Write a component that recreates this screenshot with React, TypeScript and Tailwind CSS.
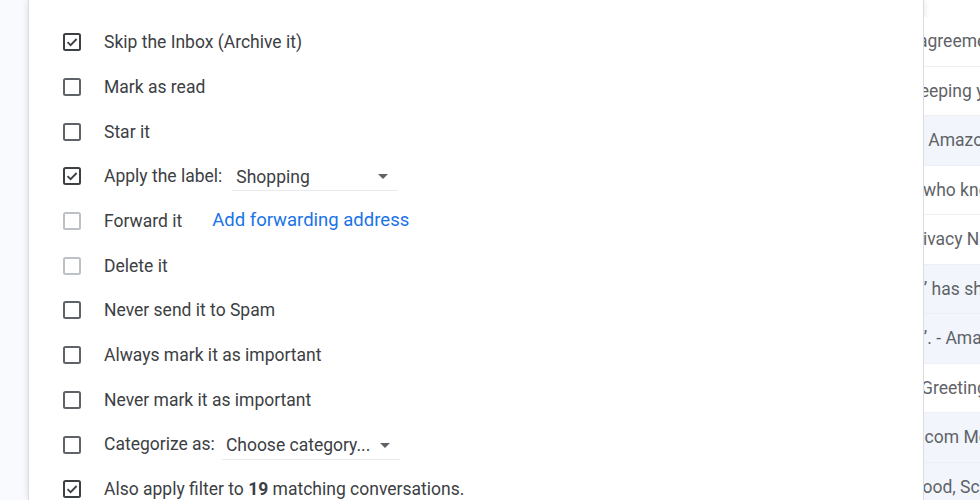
import React from "react";

type Row = {
  label: string;
  checked?: boolean;
  faded?: boolean;
  extra?: React.ReactNode;
};

function Checkbox({ checked, faded }: { checked?: boolean; faded?: boolean }) {
  const color = faded ? "#bdc1c6" : checked ? "#3c4043" : "#5f6368";
  return (
    <svg width="18" height="18" viewBox="0 0 18 18" className="shrink-0">
      <rect x="1" y="1" width="16" height="16" rx="1.5" fill="none" stroke={color} strokeWidth="2" />
      {checked && (
        <path d="M4.5 9.2 L7.6 12.2 L13.6 6" fill="none" stroke="#3c4043" strokeWidth="1.8" />
      )}
    </svg>
  );
}

function Select({ value, width }: { value: string; width: string }) {
  return (
    <div className={`flex items-center justify-between border-b border-[#e8eaed] h-[28px] pl-[4px] pr-[10px] ${width}`}>
      <span className="text-[#3c4043]">{value}</span>
      <svg width="10" height="5" viewBox="0 0 10 5">
        <path d="M0 0 L10 0 L5 5 Z" fill="#5f6368" />
      </svg>
    </div>
  );
}

const rows: Row[] = [
  { label: "Skip the Inbox (Archive it)", checked: true },
  { label: "Mark as read" },
  { label: "Star it" },
  {
    label: "Apply the label:",
    checked: true,
    extra: (
      <div className="ml-[10px] mt-[2px]">
        <Select value="Shopping" width="w-[166px]" />
      </div>
    ),
  },
  {
    label: "Forward it",
    faded: true,
    extra: <span className="ml-[30px] text-[18.5px] text-[#1a73e8]">Add forwarding address</span>,
  },
  { label: "Delete it", faded: true },
  { label: "Never send it to Spam" },
  { label: "Always mark it as important" },
  { label: "Never mark it as important" },
  {
    label: "Categorize as:",
    extra: (
      <div className="ml-[7px] mt-[2px]">
        <Select value="Choose category..." width="w-[178px]" />
      </div>
    ),
  },
];

const mail: { text: string; offset: string; read: boolean }[] = [
  { text: "agreement", offset: "-ml-[6px]", read: false },
  { text: "keeping you", offset: "-ml-[13px]", read: false },
  { text: " Amazon", offset: "ml-[0px]", read: true },
  { text: "who knows", offset: "-ml-[1px]", read: false },
  { text: "Privacy Notice", offset: "-ml-[18px]", read: false },
  { text: "\u201D has shared", offset: "-ml-[3px]", read: true },
  { text: "\u201D. - Amazon", offset: "-ml-[3px]", read: true },
  { text: "Greetings", offset: "-ml-[3px]", read: false },
  { text: ".com Member", offset: "-ml-[4px]", read: true },
  { text: "Food, School", offset: "-ml-[11px]", read: true },
];

export default function App() {
  return (
    <div
      className="flex h-[500px] w-[980px] overflow-hidden bg-white text-[17.5px]"
      style={{ fontFamily: "Roboto, 'Liberation Sans', sans-serif" }}
    >
      <div className="w-[28px] shrink-0 bg-[#f8fafd]" />
      <div className="w-[896px] shrink-0 bg-white border-l border-r border-[#dadce0] shadow-[0_0_6px_rgba(60,64,67,0.15)] pt-[20px] pl-[34px]">
        {rows.map((r) => (
          <div key={r.label} className="flex items-center h-[44.7px]">
            <Checkbox checked={r.checked} faded={r.faded} />
            <span className="ml-[23px] text-[#3c4043] whitespace-nowrap">{r.label}</span>
            {r.extra}
          </div>
        ))}
        <div className="flex items-center h-[44.7px]">
          <Checkbox checked />
          <span className="ml-[23px] text-[#3c4043] whitespace-nowrap">
            Also apply filter to <b className="font-bold">19</b> matching conversations.
          </span>
        </div>
      </div>
      <div className="flex-1 flex flex-col overflow-hidden pt-[17px]">
        {mail.map((m, i) => (
          <div
            key={i}
            className={`h-[49.5px] shrink-0 flex items-center border-b border-[#eceff3] overflow-hidden whitespace-pre ${
              m.read ? "bg-[#f2f6fc]" : "bg-white"
            }`}
          >
            <span className={`text-[#5f6368] ${m.offset}`}>{m.text}</span>
          </div>
        ))}
      </div>
    </div>
  );
}
